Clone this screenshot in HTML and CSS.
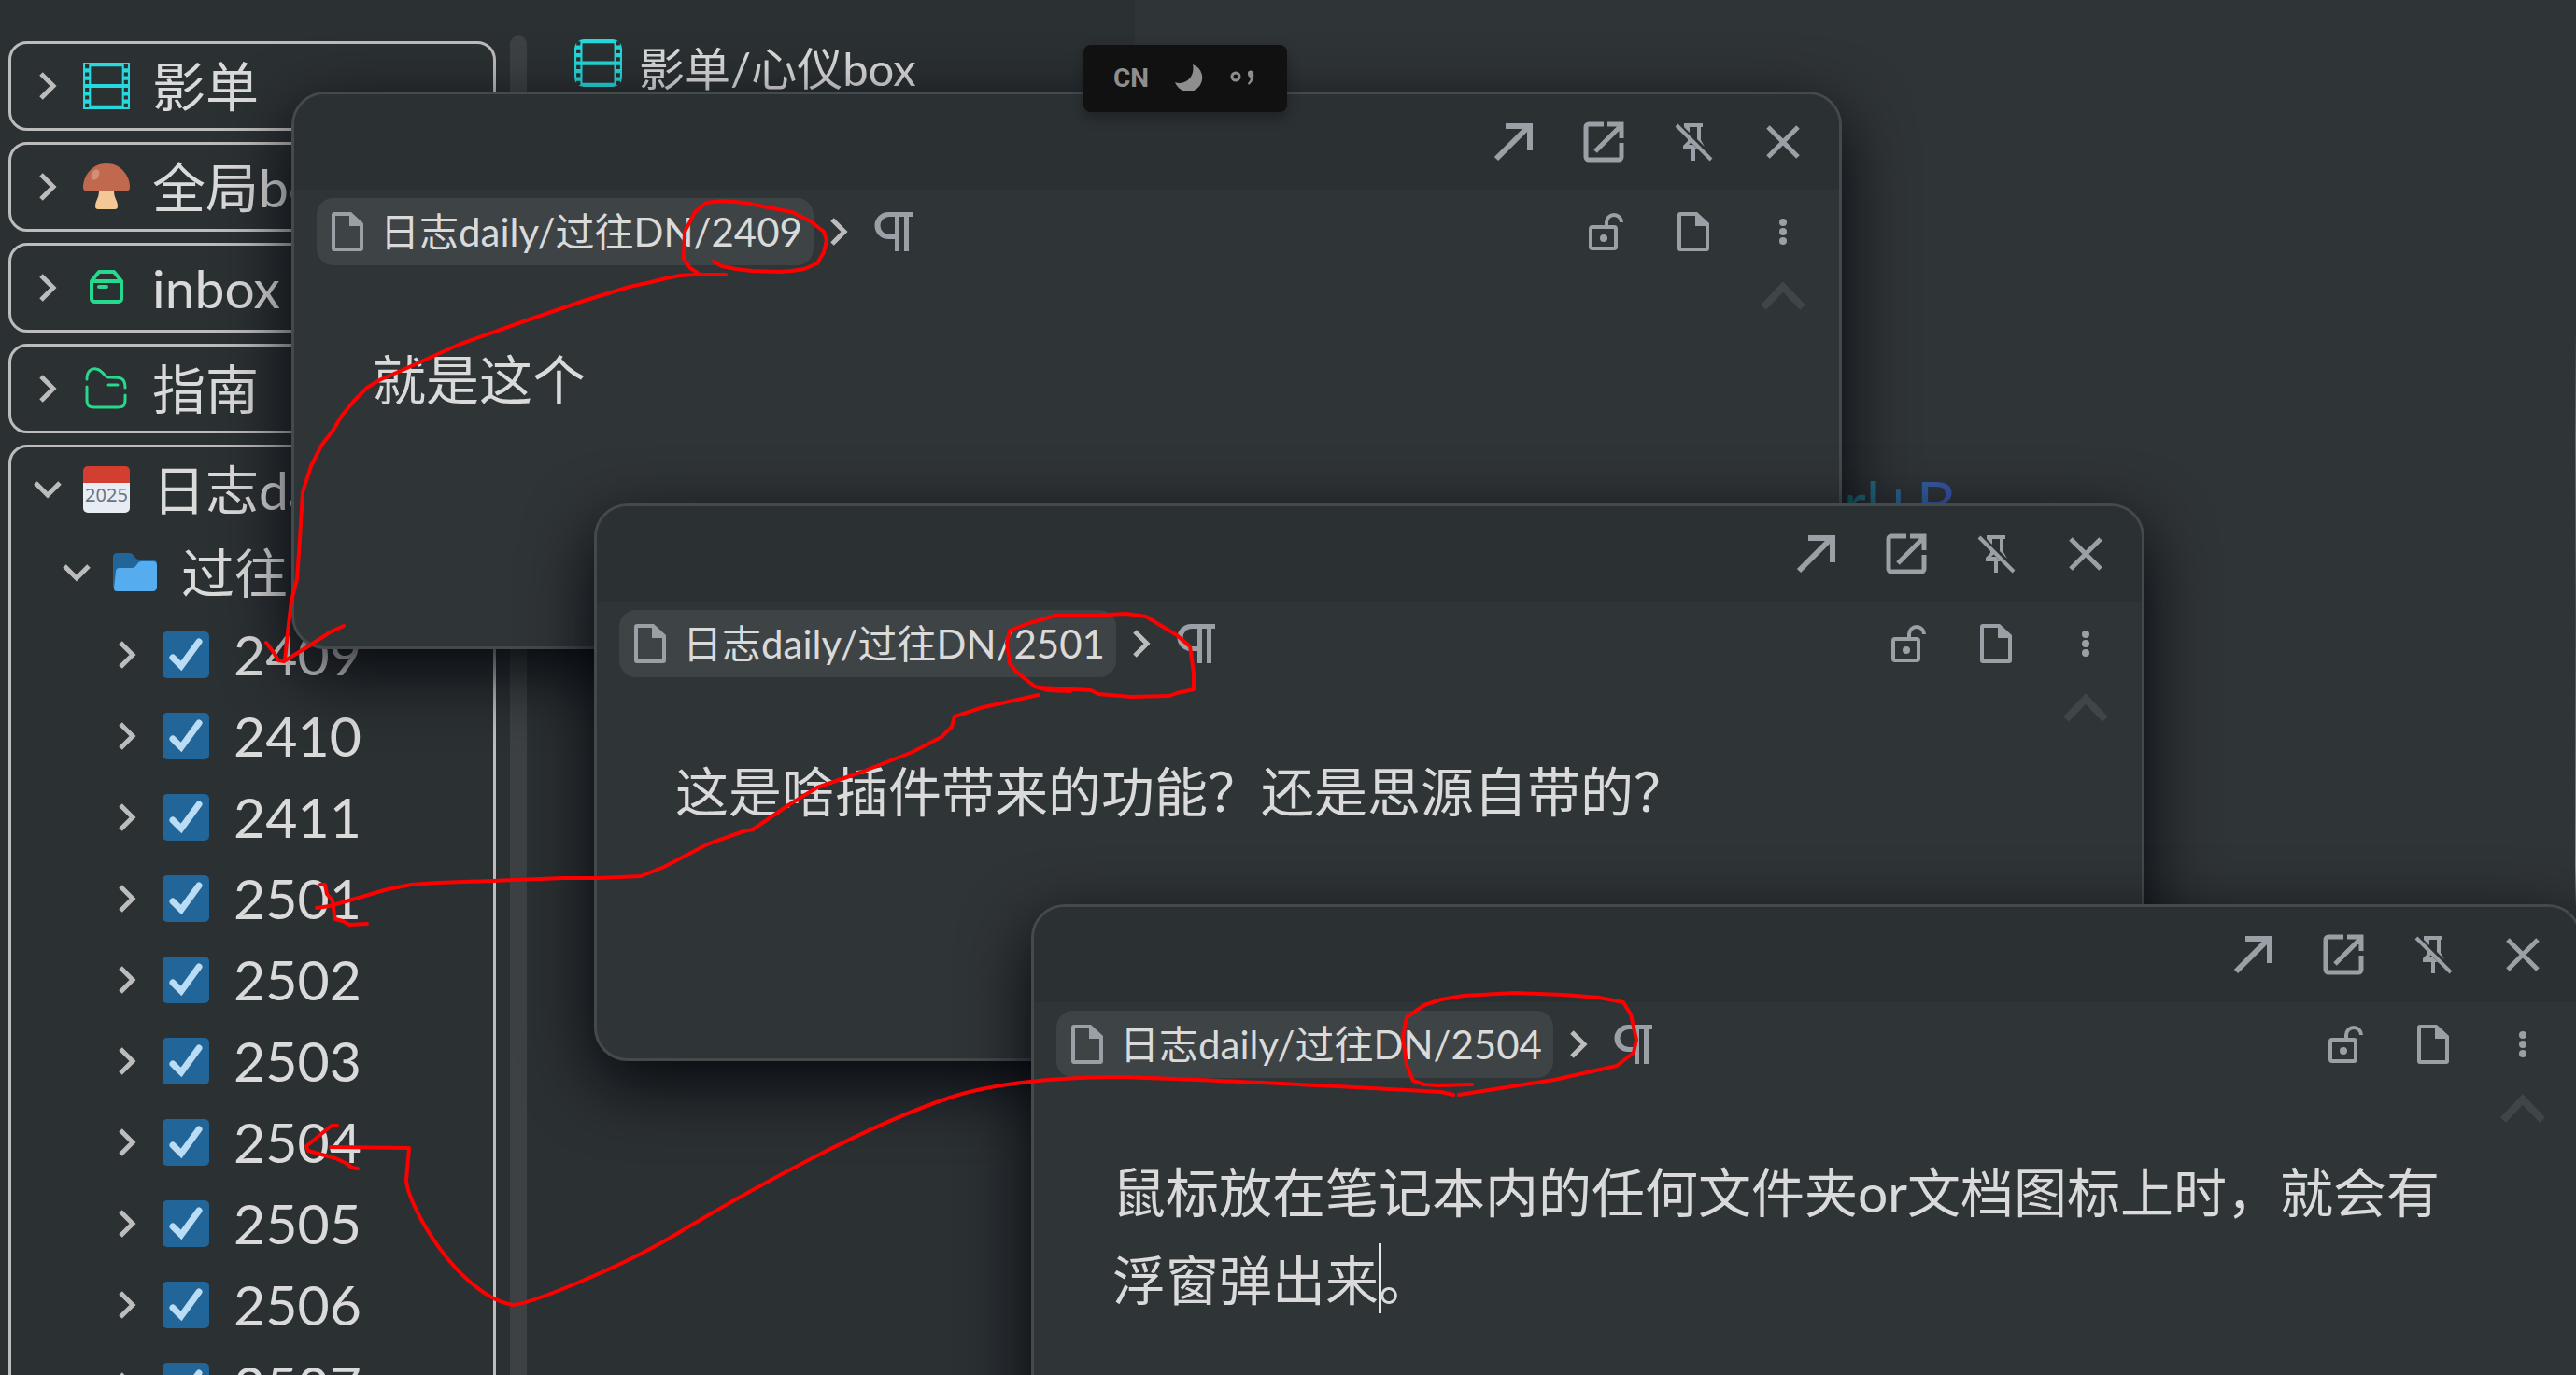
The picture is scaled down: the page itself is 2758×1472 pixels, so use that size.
FILE: index.html
```html
<!DOCTYPE html>
<html lang="zh-CN">
<head>
    <meta charset="UTF-8">
    <meta name="viewport" content="width=device-width, initial-scale=1.0">
    <title>影单/心仪box</title>
    <link rel="stylesheet" href="styles.css">
</head>
<body>
    <svg class="sprite" aria-hidden="true">
      <symbol id="i-right" viewBox="0 0 48 48"><path d="M17 11l13 13-13 13" fill="none" stroke="currentColor" stroke-width="5"/></symbol>
      <symbol id="i-down" viewBox="0 0 48 48"><path d="M11 17l13 13 13-13" fill="none" stroke="currentColor" stroke-width="5"/></symbol>
      <symbol id="i-up" viewBox="0 0 48 48"><path d="M3 36l21-22 21 22" fill="none" stroke="currentColor" stroke-width="8"/></symbol>
      <symbol id="i-film" viewBox="0 0 48 48">
        <path fill="currentColor" fill-rule="evenodd" d="M0 0h48v48H0zM8 4v18h32V4zM8 26v18h32V26zM2 2v4h4V2zM2 10v4h4v-4zM2 18v4h4v-4zM2 26v4h4v-4zM2 34v4h4v-4zM2 42v4h4v-4zM42 2v4h4V2zM42 10v4h4v-4zM42 18v4h4v-4zM42 26v4h4v-4zM42 34v4h4v-4zM42 42v4h4v-4z"/>
      </symbol>
      <symbol id="i-arrow" viewBox="0 0 48 48"><path d="M5 42L39 8M15 7h26v26" fill="none" stroke="currentColor" stroke-width="6"/></symbol>
      <symbol id="i-open" viewBox="0 0 48 48">
        <path d="M24 5H8a3 3 0 0 0-3 3v32a3 3 0 0 0 3 3h32a3 3 0 0 0 3-3V25M28 5h15v15M15 34L42 7" fill="none" stroke="currentColor" stroke-width="5"/>
      </symbol>
      <symbol id="i-unpin" viewBox="0 0 48 48">
        <path d="M14 4h20v4h-2v14l4 7-5-5-3-3V8h-8v6l-6-6zM18 20l4 4-3 3h5l5 5H13v-4l5-5z" fill="currentColor"/>
        <path d="M24 30v14" stroke="currentColor" stroke-width="4"/>
        <path d="M6 6l37 37" stroke="currentColor" stroke-width="4"/>
      </symbol>
      <symbol id="i-close" viewBox="0 0 48 48"><path d="M8 8l32 32M40 8L8 40" fill="none" stroke="currentColor" stroke-width="5"/></symbol>
      <symbol id="i-unlock" viewBox="0 0 48 48">
        <rect x="10" y="19" width="27" height="23" rx="2" fill="none" stroke="currentColor" stroke-width="4"/>
        <circle cx="24" cy="31" r="4" fill="currentColor"/>
        <path d="M27 18v-4a8 8 0 0 1 16 0" fill="none" stroke="currentColor" stroke-width="4"/>
      </symbol>
      <symbol id="i-file" viewBox="0 0 48 48">
        <path fill="currentColor" fill-rule="evenodd" d="M10 3h18l13 12v27a3 3 0 0 1-3 3H10a3 3 0 0 1-3-3V6a3 3 0 0 1 3-3zM11 7v34h26V18H26V7z"/>
      </symbol>
      <symbol id="i-more" viewBox="0 0 48 48"><g fill="currentColor"><circle cx="24" cy="14" r="4"/><circle cx="24" cy="24" r="4"/><circle cx="24" cy="34" r="4"/></g></symbol>
      <symbol id="i-para" viewBox="0 0 48 48">
        <path fill="currentColor" d="M18 3h26v5h-4v37h-5V8h-5v37h-5V32h-7A14 14 0 0 1 18 3zM19 8a9 9 0 0 0 0 19h6V8z"/>
      </symbol>
      <symbol id="i-check" viewBox="0 0 50 50"><path d="M11 28l9 9L39 11" fill="none" stroke="#badcf5" stroke-width="7" stroke-linecap="round"/></symbol>
    </svg>

    <div class="layout">
      <nav class="filetree" aria-label="文档树">
        <ul class="notebook">
          <li>
            <div class="row"><button class="toggle" aria-label="展开"><svg><use href="#i-right"/></svg></button>
              <svg class="icon film"><use href="#i-film"/></svg><span class="name">影单</span></div>
          </li>
        </ul>
        <ul class="notebook">
          <li>
            <div class="row"><button class="toggle" aria-label="展开"><svg><use href="#i-right"/></svg></button>
              <svg class="icon" viewBox="0 0 50 50">
                <path d="M17 29h16c0 9 4 10 4 17 0 2-1 3-3 3H16c-2 0-3-1-3-3 0-7 4-8 4-17z" fill="#f3c894"/>
                <path d="M25 0c16 0 25 14 25 25 0 4-2 5-5 5H5c-3 0-5-1-5-5C0 14 9 0 25 0z" fill="#c1694f"/>
                <ellipse cx="13" cy="12" rx="4" ry="6" fill="#d09078" transform="rotate(25 13 12)"/>
              </svg><span class="name">全局box</span></div>
          </li>
        </ul>
        <ul class="notebook">
          <li>
            <div class="row"><button class="toggle" aria-label="展开"><svg><use href="#i-right"/></svg></button>
              <svg class="icon green" viewBox="0 0 50 50" fill="none" stroke="currentColor" stroke-width="4" stroke-linejoin="round">
                <path d="M9 18v19a3 3 0 0 0 3 3h26a3 3 0 0 0 3-3V18M9 18h32l-8-10H17z"/>
                <path d="M17 24h8" stroke-linecap="round"/>
              </svg><span class="name">inbox</span></div>
          </li>
        </ul>
        <ul class="notebook">
          <li>
            <div class="row"><button class="toggle" aria-label="展开"><svg><use href="#i-right"/></svg></button>
              <svg class="icon green" viewBox="0 0 50 50" fill="none" stroke="currentColor" stroke-width="3" stroke-linecap="round">
                <path d="M4 15c0-8 4-12 10-11 7 1 9 9 13 9 12 0 18-1 18 11M4 23v14c0 6 2 8 8 8h25c6 0 8-2 8-8v-5M27 21h10"/>
              </svg><span class="name">指南</span></div>
          </li>
        </ul>
        <ul class="notebook">
          <li>
            <div class="row"><button class="toggle" aria-label="折叠"><svg><use href="#i-down"/></svg></button>
              <span class="icon calendar">2025</span><span class="name">日志daily</span></div>
            <ul class="docs">
              <li>
                <div class="row folder"><button class="toggle" aria-label="折叠"><svg><use href="#i-down"/></svg></button>
                  <svg class="icon" viewBox="0 0 50 50">
                    <path d="M1 8c0-2 2-4 4-4h13c6 0 6 7 11 7h14c3 0 5 2 5 4v27H1z" fill="#226699"/>
                    <path d="M4 24c0-2 1-4 4-4h13c6 0 5-7 11-7h12c3 0 4 2 4 4v24c0 2-2 4-4 4H5c-2 0-3-1-3-3z" fill="#55acee"/>
                  </svg><span class="name">过往DN</span></div>
                <ul class="docs" id="months"></ul>
              </li>
            </ul>
          </li>
        </ul>
      </nav>
      <div class="scrollbar"></div>
      <section class="outline">
        <h1 class="outline-title"><svg class="film"><use href="#i-film"/></svg>影单/心仪box</h1>
      </section>
      <main class="editor"><p class="shortcut">Ctrl+B</p></main>
      <div class="wallpaper"></div>
    </div>

    <div id="windows"></div>

    <!-- pen strokes -->
    <svg class="pen" viewBox="0 0 2758 1472" preserveAspectRatio="xMinYMin meet" aria-hidden="true">
      <polyline points="764,280 773,285 788,288 805,290 834,291 848,290 861,288 875,282 882,270 885,257 882,248 868,237 848,227 822,222 798,217 773,215 756,217 744,227 739,237 733,248 732,277 739,287 748,293"/>
      <polyline points="777,294 744,294 728,295 713,298 697,302 674,307 625,322 558,345 491,369 438,393 406,407 393,415 380,428 366,445 357,460 344,477 333,499 324,527 321,577 318,620 312,643 308,677 305,707"/>
      <polyline points="285,688 292,697 298,707 304,708 330,692 353,677 368,670"/>
      <polyline points="1146,740 1122,739 1108,735 1089,720 1081,710 1078,688 1081,675 1102,667 1130,659 1165,659 1206,657 1227,660 1260,680 1274,692 1278,720 1278,738 1260,742 1252,745 1211,746 1176,743 1168,739 1150,738 1112,736"/>
      <polyline points="1112,744 1094,748 1053,757 1022,767 1019,778 1008,789 977,805 921,827 875,843 844,862 806,888 796,890 757,904 711,928 686,938 640,940 603,940 527,943 469,945 440,947 415,952 384,961 353,970 339,972"/>
      <polyline points="343,947 348,947 350,957 356,964 358,980 359,984 367,986 374,990 393,989"/>
      <polyline points="1576,1161 1540,1162 1525,1161 1513,1157 1506,1140 1502,1110 1506,1089 1525,1076 1543,1070 1567,1066 1621,1063 1674,1065 1712,1068 1738,1073 1746,1086 1752,1113 1749,1127 1731,1141 1664,1156 1562,1172"/>
      <path d="M1556 1172L1543 1169Q1300 1156 1198 1153Q1080 1154 1017 1175C930 1204 809 1270 721 1323C660 1359 565 1397 548 1397C490 1385 436 1290 435 1263L438 1229L354 1228"/>
      <polyline points="361,1205 355,1205 339,1218 328,1227 330,1232 359,1240 370,1245 377,1250 383,1251"/>
    </svg>

    <div class="ime">
      <span>CN</span>
      <svg viewBox="0 0 30 28"><path d="M19 0a15 15 0 1 1-19 19c10 4 22-5 19-19z" fill="#8e8e8e"/></svg>
      <svg viewBox="0 0 30 28"><circle cx="7" cy="13" r="4" fill="none" stroke="#8e8e8e" stroke-width="3"/><path d="M20 10a3 3 0 0 1 6-1c1 5-1 10-5 13l-1-2c2-2 3-4 3-6-2 0-3-2-3-4z" fill="#8e8e8e"/></svg>
    </div>

    <script>
      const months = ["2409", "2410", "2411", "2501", "2502", "2503", "2504", "2505", "2506", "2507"];

      const icon = (name) => `<svg><use href="#i-${name}"/></svg>`;

      document.getElementById("months").innerHTML = months.map((month) => `
        <li>
          <div class="row doc">
            <button class="toggle" aria-label="展开">${icon("right")}</button>
            <span class="icon check"><input type="checkbox" id="m-${month}" checked>${icon("check")}</span>
            <label class="name" for="m-${month}">${month}</label>
          </div>
        </li>`).join("");

      const windows = [
        { month: "2409", pos: "first", text: "就是这个" },
        { month: "2501", pos: "second", text: "这是啥插件带来的功能？还是思源自带的？" },
        { month: "2504", pos: "third", text: '鼠标放在笔记本内的任何文件夹or文档图标上时，就会有浮窗弹出来<span class="caret"></span>。' }
      ];

      document.getElementById("windows").innerHTML = windows.map((win) => `
        <section class="popover ${win.pos}">
          <header class="titlebar">
            <button aria-label="跳转">${icon("arrow")}</button>
            <button aria-label="新窗口打开">${icon("open")}</button>
            <button aria-label="钉住">${icon("unpin")}</button>
            <button aria-label="关闭">${icon("close")}</button>
          </header>
          <div class="breadcrumb">
            <a class="crumb" href="#">${icon("file")}日志daily/过往DN/${win.month}</a>
            <span class="crumb-arrow">${icon("right")}</span>
            <button class="para" aria-label="段落">${icon("para")}</button>
            <div class="tools">
              <button aria-label="锁定">${icon("unlock")}</button>
              <button aria-label="文档">${icon("file")}</button>
              <button aria-label="更多">${icon("more")}</button>
            </div>
          </div>
          <button class="to-top" aria-label="顶部">${icon("up")}</button>
          <div class="content" contenteditable="true" spellcheck="false">${win.text}</div>
        </section>`).join("");
    </script>
</body>
</html>
```

FILE: styles.css
```css
* {
  box-sizing: border-box;
}

body {
  margin: 0;
  height: 100vh;
  overflow: hidden;
  position: relative;
  background: #2b3033;
  color: #dadada;
  font-family: Lato, "Noto Sans CJK SC", sans-serif;
  font-size: 57px;
}

ul {
  list-style: none;
  margin: 0;
  padding: 0;
}

button {
  padding: 0;
  border: none;
  background: transparent;
  color: inherit;
  cursor: pointer;
}

svg {
  display: block;
  width: 48px;
  height: 48px;
  flex: none;
}

.sprite {
  position: absolute;
  width: 0;
  height: 0;
}

.layout {
  display: flex;
  height: 100%;
  overflow: hidden;
}

/* file tree */
.filetree {
  flex: 0 0 546px;
  padding: 44px 15px 0 9px;
}

.notebook {
  margin-bottom: 12px;
  border: 3px solid #bcbcbc;
  border-radius: 20px;
}

.row {
  display: flex;
  align-items: center;
  height: 90px;
  padding-left: 15px;
  line-height: 80px;
  white-space: nowrap;
}

.row.folder {
  height: 88px;
  padding-left: 46px;
}

.row.doc {
  height: 87px;
  padding-left: 100px;
}

.toggle {
  width: 48px;
  height: 48px;
  margin-right: 14px;
  color: #bcbcbc;
}

.icon {
  width: 50px;
  height: 50px;
  margin-right: 24px;
  flex: none;
}

.film {
  color: #25d9dc;
}

.green {
  color: #26d98c;
}

.calendar {
  border-radius: 5px;
  background: linear-gradient(#d23f31 36%, #e8edf5 36%);
  color: #66757f;
  font: 20px/62px "Noto Sans", sans-serif;
  text-align: center;
}

.check {
  display: grid;
}

.check input,
.check svg {
  grid-area: 1 / 1;
  width: 50px;
  height: 50px;
  margin: 0;
}

.check input {
  appearance: none;
  border-radius: 5px;
  background: #226699;
}

.check svg {
  pointer-events: none;
}

.doc .name {
  padding-left: 2px;
  font-size: 59px;
}

.scrollbar {
  flex: 0 0 18px;
  margin-top: 38px;
  border-radius: 9px 9px 0 0;
  background: #3d4143;
}

/* panels behind the popovers */
.outline {
  flex: 0 0 651px;
  padding: 35px 51px;
}

.outline-title {
  display: flex;
  align-items: center;
  gap: 18px;
  margin: 0;
  font-size: 49px;
  font-weight: 400;
  line-height: 76px;
  white-space: nowrap;
}

.outline-title svg {
  height: 51px;
  width: 51px;
  margin-bottom: 12px;
  border-radius: 10px;
}

.editor {
  flex: 1;
  padding: 498px 0 0 692px;
  background: #2f3437;
}

.shortcut {
  display: inline-block;
  margin: 0;
  font-size: 66px;
  line-height: 80px;
  background: linear-gradient(90deg, #1c8a80, #23788c 50%, #3a4fa8);
  background-clip: text;
  color: transparent;
}

.wallpaper {
  flex: 0 0 1px;
  background: linear-gradient(#2f3437 24%, #3f4c63 27%, #8a6a58 32%, #4a4648 45%, #a87a4c 59%, #c08a50 63%, #2f3437 66%);
}

/* popovers */
.popover {
  position: absolute;
  width: 1660px;
  height: 597px;
  border: 3px solid #44494c;
  border-radius: 36px;
  background: #2f3437;
  box-shadow: 0 24px 72px rgba(2, 4, 10, 0.9);
}

.first {
  left: 312px;
  top: 98px;
}

.second {
  left: 636px;
  top: 539px;
}

.third {
  left: 1104px;
  top: 968px;
}

.titlebar {
  display: flex;
  justify-content: flex-end;
  align-items: center;
  gap: 48px;
  height: 102px;
  padding-right: 36px;
  border-radius: 33px 33px 0 0;
  background: #2b3033;
  color: #9aa0a6;
}

.breadcrumb {
  display: flex;
  align-items: center;
  height: 90px;
  padding: 0 36px 0 24px;
}

.crumb {
  display: flex;
  align-items: center;
  gap: 11px;
  height: 72px;
  padding: 0 12px 0 9px;
  border-radius: 18px;
  background: #3e4345;
  color: #dadada;
  font-size: 42px;
  line-height: 60px;
  text-decoration: none;
  white-space: nowrap;
}

.crumb svg,
.para,
.tools {
  color: #9aa0a6;
}

.crumb-arrow {
  margin-left: 3px;
  color: #bcbcbc;
}

.para {
  margin-left: 11px;
}

.tools {
  display: flex;
  gap: 48px;
  margin-left: auto;
}

.to-top {
  display: block;
  margin: 0 36px 0 auto;
  color: #404548;
}

.content {
  padding: 18px 108px 0 84px;
  line-height: 94px;
  outline: none;
}

.caret {
  display: inline-block;
  width: 3px;
  height: 75px;
  margin-right: -3px;
  vertical-align: -14px;
  background: #e6e6e6;
}

.pen {
  position: absolute;
  inset: 0;
  width: 100%;
  height: 100%;
  pointer-events: none;
  fill: none;
  stroke: #f00;
  stroke-width: 4;
  stroke-linecap: round;
  stroke-linejoin: round;
}

/* input method bar */
.ime {
  position: absolute;
  left: 1160px;
  top: 48px;
  display: flex;
  align-items: center;
  justify-content: space-between;
  width: 218px;
  height: 72px;
  padding: 0 32px 2px;
  border-radius: 8px;
  background: #111;
  box-shadow: 0 6px 14px rgba(0, 0, 0, 0.3);
  color: #8e8e8e;
  font: 700 28px Roboto, sans-serif;
}

.ime svg {
  width: 30px;
  height: 28px;
}
```
